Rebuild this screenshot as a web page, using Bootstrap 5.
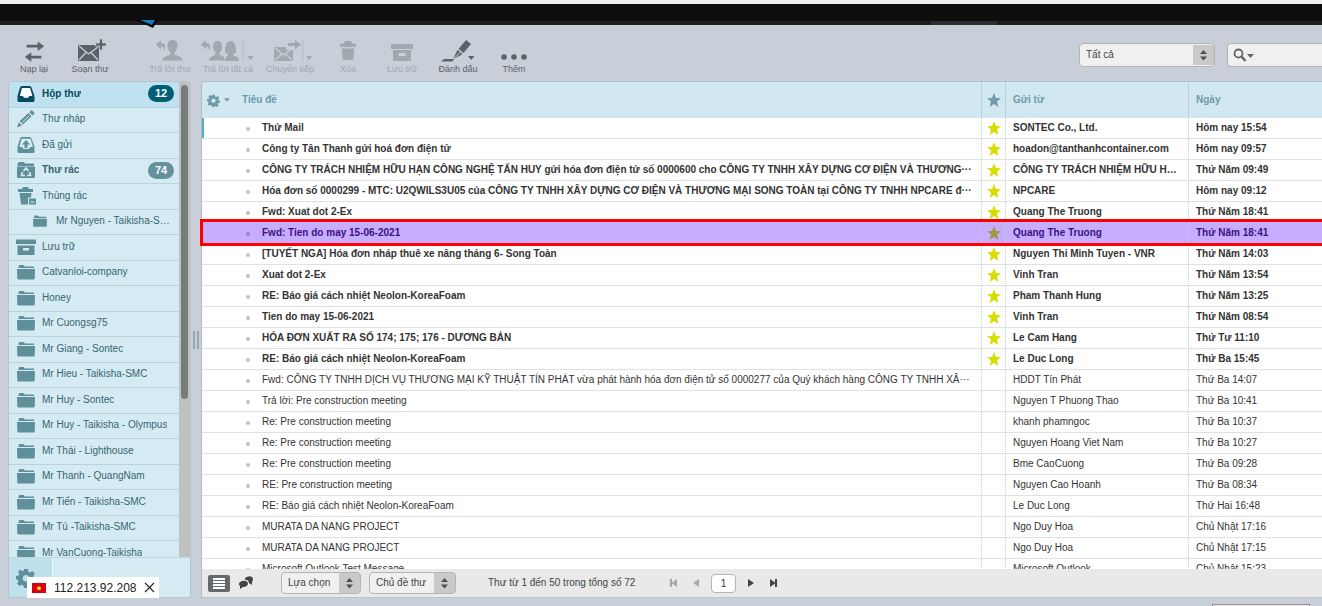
<!DOCTYPE html>
<html lang="vi">
<head>
<meta charset="utf-8">
<meta name="viewport" content="width=device-width, initial-scale=1">
<title>Hộp thư</title>
<link href="https://cdn.jsdelivr.net/npm/bootstrap@5.3.0/dist/css/bootstrap.min.css" rel="stylesheet">
<style>
body{font-family:"Liberation Sans",Arial,sans-serif;font-size:10px;line-height:14px;color:#333;background:#c8cfd9}
button{font:inherit;color:inherit;border:0;background:none;padding:0}
svg{display:block;fill:currentColor}
.topline{height:4px;background:#eee}
.topbar{height:21px;background:#0d0d0d;border-bottom:4px solid #1d1d1b;position:relative}
.topbar .logo-tip{position:absolute;left:136px;bottom:-7px}
.topbar .tab-edge{position:absolute;right:325px;bottom:-4px;width:66px;height:4px;background:#2e2e2e}
.toolbar{height:56px;padding:14px 0 0 6px;color:#5b6368}
.tool{display:flex;flex-direction:column;align-items:center;height:36px;font-size:9px;line-height:12px;white-space:nowrap;position:relative}
.tool svg{height:24px;flex:none}
.tool:disabled{color:#a1a8b0}
.w52{width:52px}.w56{width:56px}.w60{width:60px}.w64{width:64px}
.pick{appearance:none;height:22px;border:1px solid #b4b4b4;border-radius:4px;color:#444;font-size:10px;padding:0 24px 1px 6px;
background:url("data:image/svg+xml,%3Csvg xmlns='http://www.w3.org/2000/svg' viewBox='0 0 21 20'%3E%3Cpath fill='%23c9c9c9' d='M0 0h21v20H0z'/%3E%3Cpath fill='%23505050' d='M7 9l3.500-4L14 9zM7 11.500l3.500 4 3.500-4z'/%3E%3C/svg%3E") right center/21px 100% no-repeat #f0f0f0}
.pick-wide{width:136px;height:24px}
.search{width:95px;height:24px;border:1px solid #b4b4b4;border-right:0;border-radius:4px 0 0 4px;background:#f0f0f0;padding-left:5px;color:#666}
.search input{width:100%;min-width:0;border:0;background:none;outline:0}
.side{width:183px;margin-left:8px;border:1px solid #b3c5d0;border-radius:4px 4px 0 0;background:#d5ebf3;overflow:hidden}
.folders{display:grid;grid-auto-rows:26px 25px;align-content:start;overflow:hidden;margin:0;padding:0;list-style:none}
.folders a{display:flex;align-items:center;height:100%;padding:0 5px 2px 7px;border-bottom:1px solid #b9d3dc;color:#376572;text-decoration:none}
.folders svg{width:20px;height:18px;margin-right:6px;color:#5f8f9b;flex:none}
.folders .sub{padding-left:22px}
.folders .sub svg{width:18px;height:14px;margin-right:7px}
.folders .unread{font-weight:700}
.folders .current{background:#c0e2f0;color:#074b61}
.folders .current svg{color:#074b61}
.count{margin-left:auto;min-width:26px;height:17px;line-height:17px;border-radius:9px;text-align:center;color:#fff;font-size:11px;background:#64919d}
.current .count{background:#005d76}
.track{width:11px;background:#c1c1c1;padding:3px 2px;flex:none}
.thumb{height:67%;border-radius:4px;background:#747d7b}
.side-foot{height:40px;border-top:1px solid #bdd7e1;flex:none}
.side-foot button{width:44px;background:#bfe1ec;color:#5f8f9b;border-right:1px solid #eef7fa;padding-left:7px}
.split{width:10px;flex:none}
.split i{display:block;width:6px;height:18px;border:solid #9ca6b1;border-width:0 2px}
.main-panel{border:1px solid #b1bdc9;border-width:1px 0 0 1px;border-radius:4px 0 0 0;min-width:0}
.listbox{overflow-x:visible;overflow-y:clip;min-height:0;background:#fff;border-radius:4px 0 0 0}
.msgs{table-layout:fixed;width:100%;margin:0;border-collapse:separate;border-spacing:0;color:#333}
.msgs th,.msgs td{padding:0 7px!important;height:21px;border-bottom:1px solid #dfe2e3!important;white-space:nowrap;overflow:hidden;text-overflow:ellipsis;vertical-align:middle;color:inherit!important;background:none!important;line-height:14px}
.msgs thead th{height:36px;background:#d1e8f2!important;color:#6e9ba7!important;border-bottom:0!important}
.msgs thead th:first-child{border-radius:4px 0 0 0}
.msgs thead th+th{border-left:1px solid #b9d0da}
.msgs td+td{border-left:1px dotted #c3ced2}
.msgs thead .opt{padding:0 0 0 5px!important}
.msgs td.subj{padding:0 8px 0 60px!important;background:radial-gradient(circle at 46px 11px,#c4c4c4 1.500px,transparent 2.500px)!important}
.msgs .flag{padding:0!important}
.msgs .flag svg{margin:0 auto;width:14px;height:14px}
.msgs tbody .flag{color:#d6de00!important}
.msgs .new{font-weight:700}
.msgs .focus td.subj{box-shadow:inset 2px 0 #4fb0bf}
.msgs .picked{background:#c6adff;color:#3c1080;position:relative}
.msgs .picked .subj{background:radial-gradient(circle at 46px 11px,#9c83cc 1.500px,transparent 2.500px)!important}
.msgs .picked .flag{color:#a09840!important}
.msgs .picked .subj::after{content:"";position:absolute;left:-2px;right:-3px;top:-4px;height:27px;border:3px solid #f00;box-shadow:inset 0 1px #c6adff}
.msg-foot{height:29px;background:#e9e9e9;border-bottom:1px solid #bcc4ca;flex:none;color:#444;padding-left:6px}
.mode{width:22px;height:17px;background:#646a6e;color:#fff;border-radius:2px}
.tree{width:16px;margin-right:27px}
.first{width:80px}
.second{width:87px}
.range{margin-left:32px;width:179px;white-space:nowrap}
.pager{gap:8px}
.pager button{width:14px;display:flex;justify-content:center}
.pager .dim{color:#a8a8a8}
.pageno{width:25px;height:19px;border:1px solid #b4b4b4;border-radius:4px;text-align:center;font-size:10px;color:#333}
.hostbar{position:absolute;left:27px;bottom:8px;width:132px;height:21px;background:#fff;color:#222;font-size:12px;padding:0 4px 0 5px}
.hostbar svg{flex:none}
.corner{position:absolute;right:12px;bottom:0;width:98px;height:2px;background:#e8e8e8;border:1px solid #998f92;border-bottom:0}
</style>
</head>
<body>
<svg width="0" height="0" class="position-absolute" aria-hidden="true">
<symbol id="star" viewBox="0 0 14 14"><path d="M7 0l1.900 4.900 5.100.3-4 3.300L11.400 14 7 11 2.600 14 4 8.500 0 5.200l5.100-.3z"/></symbol>
<symbol id="gear" viewBox="0 0 20 20"><path fill-rule="evenodd" d="M8 1h4l.4 2.700 1.800.8L16.400 3 19 5.700l-1.700 2.100.5 1.700 2.200.4v3.500l-2.700.5-.8 1.700 1.500 2.200-2.600 2.300-2.200-1.500-1.500.6L11 20H8l-.7-2.500-1.800-.7L3.300 18 1 15.600l1.500-2.200-.7-1.600L0 11.300V8l2.600-.5.7-1.600L2 3.900 4.400 1.500l2.200 1.700 1-.4zM10 7a3.300 3.300 0 1 0 0 6.600A3.300 3.300 0 0 0 10 7z"/></symbol>
<symbol id="inbox" viewBox="0 0 20 18"><path fill="#fff" d="M5.500 3h8.500l3 9H3z"/><path fill-rule="evenodd" d="M4 2.500Q4.400 1 6 1h7.500q1.500 0 2 1.500L18.500 11v4.500q0 1.500-1.500 1.500H3q-1.500 0-1.500-1.500V11zM6 3L3.800 11h3l1.500 2h3.600l1.500-2h3l-2.300-8z"/></symbol>
<symbol id="pencil" viewBox="0 0 20 18"><path d="M1 17.500l1.700-5.200 3.200 3.200zM3.600 11.300l8.800-8.200 3.200 3.200-8.800 8.200zM13.400 2.200L15.600.1l3.200 3.200-2.200 2.100z"/><path stroke="#d5ebf3" d="M5.500 13l8-7.500"/></symbol>
<symbol id="sent" viewBox="0 0 20 18"><path fill-rule="evenodd" d="M4 2.500Q4.400 1 6 1h7.500q1.500 0 2 1.500L18.500 11v4.500q0 1.500-1.500 1.500H3q-1.500 0-1.500-1.500V11zM5.600 2.800L3.300 11h2.500l1.700 2h5.200l1.700-2h2.500l-2.300-8.200z"/><path d="M10 4l4 4.500h-2.500V12h-3V8.500H6z"/></symbol>
<symbol id="junk" viewBox="0 0 20 18"><path d="M1.500 2.500L3 1h5l1 1.500h9V5h-16.500zM1 5.500h18V16q0 1-1 1H2q-1 0-1-1z"/><path d="M7.500 10L10 7l2.500 3M13.500 11l1 3.500H11M9 14.500H5.500l1-3.500" fill="none" stroke="#d5ebf3" stroke-width="1.700"/></symbol>
<symbol id="bin" viewBox="0 0 20 18"><path d="M2 2h4L7 0h5l1 2h4v3H2zM3.500 6h12l-.5 4.500h-3V17.500H5zM13 11.500h7V17.500h-7z"/><path stroke="#d5ebf3" d="M14.500 15h4"/></symbol>
<symbol id="folder" viewBox="0 0 20 18"><path d="M2.500 3.500Q2.500 2 4 2h3.500l1.500 1.500h9V5h-15.500zM1 6h18l-.3 9.500q0 1-1 1H2.300q-1 0-1-1z"/></symbol>
<symbol id="box" viewBox="0 0 20 18"><path fill-rule="evenodd" d="M0 1.500h20V6H0zM1.500 7.500h17V17h-17zM7 10v2.500h6V10z"/></symbol>
<symbol id="caret" viewBox="0 0 7 4"><path d="M0 0h7L3.500 4z"/></symbol>
</svg>

<div class="vh-100 d-flex flex-column overflow-hidden position-relative">
<div class="topline flex-shrink-0"></div>
<header class="topbar flex-shrink-0"><svg class="logo-tip" width="22" height="8" aria-hidden="true"><path d="M0 0l17 8 5-8z" fill="#000"/><path d="M4 0l12 5 3-5z" fill="#0f7fc4"/></svg><span class="tab-edge"></span></header>

<nav class="toolbar d-flex flex-shrink-0" aria-label="Công cụ">
<button class="tool w56"><svg width="24" viewBox="0 0 24 24"><path d="M4 5h12V1.500l7 5-7 5V8H4zM20 16.500H9V13l-7 5 7 5v-3.500h11z" transform="translate(1 1) scale(.92 .95)"/></svg>Nạp lại</button>
<button class="tool w56 me-4"><svg width="32" viewBox="0 0 32 24"><path d="M4 6h21v16H4z"/><path d="M5 7l9.500 8L24 8M5 21l7-7.500M24 21l-7-7.500" stroke="#c8cfd9" stroke-width="1.300" fill="none"/><path d="M25.500 0h3v4h4v3h-4v4h-3V7h-4V4h4z" stroke="#c8cfd9" stroke-width=".8"/></svg>Soạn thư</button>
<button class="tool w56" disabled><svg width="30" viewBox="0 0 30 24"><path d="M1 5.500l5-4.500v3c4 0 5.500 3 3 8 0-3.500-1-4.500-3-4.500v3zM12.500 6q0-5 5-5t5 5-3 7.500v2l6 2.500q2 1 2 3.500H7.500q0-2.500 2-3.500l6-2.500v-2q-3-2.500-3-7.500z"/></svg>Trả lời thư</button>
<button class="tool w60" disabled><svg width="54" viewBox="0 0 54 24"><path d="M0 5.500L5 1v3c4 0 5.500 3 3 8 0-3.500-1-4.500-3-4.500v3zM12 7q0-5 4.500-5T21 7t-2.500 6.500v2L23 18v3.500H8q0-2.500 2-3.500l4.500-2.500v-2Q12 11 12 7zM24 14q-.5-12 5.500-12T35 14l-3 1v1l5 2.500q1 .5 1 3.500H23.500l.5-3 3-3v-1z"/><path d="M42 1v22" stroke="#b4bcc6"/><path d="M46 17h7l-3.500 4z"/></svg>Trả lời tất cả</button>
<button class="tool w64" disabled><svg width="44" viewBox="0 0 44 24"><path d="M6 8h12v3h7v11H6z"/><path d="M7 9l8.500 7L24 10M7 21l6.500-6M24 21l-6.500-6" stroke="#c8cfd9" stroke-width="1.300" fill="none"/><path d="M20 4h7V1l6 4.500-6 4.500V7h-7z"/><path d="M35 1v22" stroke="#b4bcc6"/><path d="M38 17h6l-3 4z"/></svg>Chuyển tiếp</button>
<button class="tool w52" disabled><svg width="16" viewBox="0 0 16 24"><path d="M0 4.500h4L5 2h6l1 2.500h4V8H0zM1.500 9.500h13L13 21H3z"/></svg>Xóa</button>
<button class="tool w56" disabled><svg width="22" viewBox="0 0 22 24"><path fill-rule="evenodd" d="M0 5h22v5H0zM2 11h18v11H2zM7.500 14v3h7v-3z"/></svg>Lưu trữ</button>
<button class="tool w56"><svg width="34" viewBox="0 0 34 24"><path d="M25 1l5 4-7.500 9-5-4zM16.500 11l5 4-4 2.500-5 2 2-4.500z"/><path d="M0 22.500l3-2.500h10l-1.500 2.500z"/><path d="M27 17h6.500l-3.300 4z"/><path d="M14 18.500l5-5" stroke="#c8cfd9"/></svg>Đánh dấu</button>
<button class="tool w56"><svg width="28" viewBox="0 0 28 24"><circle cx="4" cy="18" r="2.800"/><circle cx="14" cy="18" r="2.800"/><circle cx="24" cy="18" r="2.800"/></svg>Thêm</button>
<div class="d-flex ms-auto mt-1">
<select class="pick pick-wide me-2" aria-label="Bộ lọc"><option>Tất cả</option></select>
<div class="search d-flex align-items-center ms-1"><svg width="22" height="14" viewBox="0 0 22 14" class="flex-shrink-0"><circle cx="5.500" cy="5.500" r="4" fill="none" stroke="currentColor" stroke-width="1.800"/><path d="M8.500 8.500l4 4.500" stroke="currentColor" stroke-width="2.500"/><path d="M14 6h7l-3.500 4z"/></svg><input type="search" aria-label="Tìm kiếm"></div>
</div>
</nav>

<div class="d-flex flex-fill pb-2 overflow-hidden">
<aside class="side d-flex flex-column flex-shrink-0">
<div class="d-flex flex-fill overflow-hidden"><ul class="folders flex-fill" id="folders"></ul><div class="track"><div class="thumb"></div></div></div>
<div class="side-foot d-flex"><button aria-label="Thiết lập"><svg width="20" height="20"><use href="#gear"/></svg></button></div>
</aside>
<div class="split d-flex align-items-center justify-content-center"><i></i></div>
<main class="main-panel flex-fill d-flex flex-column">
<div class="listbox flex-fill">
<table class="table msgs">
<colgroup><col><col style="width:24px"><col style="width:183px"><col style="width:134px"></colgroup>
<thead><tr><th class="opt"><div class="d-flex align-items-center"><svg width="13" height="13" class="me-1"><use href="#gear"/></svg><svg width="6" height="4" class="me-2"><use href="#caret"/></svg><span class="ps-1">Tiêu đề</span></div></th><th class="flag"><svg><use href="#star"/></svg></th><th>Gửi từ</th><th>Ngày</th></tr></thead>
<tbody id="rows"></tbody>
</table>
</div>
<footer class="msg-foot d-flex align-items-center">
<button class="mode me-2" aria-label="Danh sách"><svg width="22" height="17"><path d="M5 3h12v2H5zM5 6h12v2H5zM5 9h12v2H5zM5 12h12v2H5z"/></svg></button>
<button aria-label="Chuỗi thư" class="tree"><svg width="16" height="14"><path d="M7 2q4-3 7-1 2 2 0 5l0 3-3-2q-1-4-4-3z"/><path d="M4 5q5-1 6 2 0 4-5 4l-3 2v-3q-3-3 2-5z"/></svg></button>
<select class="pick first" aria-label="Lựa chọn"><option>Lựa chọn</option></select>
<select class="pick second ms-2" aria-label="Chủ đề"><option>Chủ đề thư</option></select>
<span class="range">Thư từ 1 đến 50 trong tổng số 72</span>
<div class="pager d-flex align-items-center">
<button disabled aria-label="Trang đầu" class="dim"><svg width="8" height="8"><path d="M0 0h2v3.500L7 0v8L2 4.500V8H0z"/></svg></button>
<button disabled aria-label="Trang trước" class="dim"><svg width="6" height="8"><path d="M6 0v8L0 4z"/></svg></button>
<input class="pageno" value="1" aria-label="Trang">
<button aria-label="Trang sau"><svg width="6" height="8"><path d="M0 0v8l6-4z"/></svg></button>
<button aria-label="Trang cuối"><svg width="8" height="8"><path d="M8 0H6v3.500L1 0v8l5-3.500V8h2z"/></svg></button>
</div>
</footer>
</main>
</div>
<div class="hostbar d-flex align-items-center"><svg width="14" height="10" class="me-2"><path fill="#d80015" d="M0 0h14v10H0z"/><path fill="#ff0" d="M7 2.500l.8 1.700 1.900.2-1.400 1.200.4 1.900L7 6.500l-1.700 1 .4-1.900-1.400-1.200 1.900-.2z"/></svg><span>112.213.92.208</span><button class="ms-auto" aria-label="Đóng"><svg width="11" height="11"><path d="M1 1l9 9M10 1l-9 9" stroke="#222" stroke-width="1.100"/></svg></button></div>
<div class="corner"></div>
</div>
<script>
// icon, label, unread count, extra class
const folders=[["inbox","Hộp thư",12,"unread current"],["pencil","Thư nháp"],["sent","Đã gửi"],["junk","Thư rác",74,"unread"],["bin","Thùng rác"],["folder","Mr Nguyen - Taikisha-S…",0,"sub"],["box","Lưu trữ"],["folder","Catvanloi-company"],["folder","Honey"],["folder","Mr Cuongsg75"],["folder","Mr Giang - Sontec"],["folder","Mr Hieu - Taikisha-SMC"],["folder","Mr Huy - Sontec"],["folder","Mr Huy - Taikisha - Olympus"],["folder","Mr Thái - Lighthouse"],["folder","Mr Thanh - QuangNam"],["folder","Mr Tiến - Taikisha-SMC"],["folder","Mr Tú -Taikisha-SMC"],["folder","Mr VanCuong-Taikisha"]];
document.getElementById("folders").innerHTML=folders.map(([i,t,n,c])=>`<li class="overflow-hidden"><a href="#" class="${c||""}"><svg><use href="#${i}"/></svg><span class="text-truncate">${t}</span>${n?`<span class="count">${n}</span>`:""}</a></li>`).join("");
// subject, sender, date
const mails=[["Thử Mail","SONTEC Co., Ltd.","Hôm nay 15:54"],["Công ty Tân Thanh gửi hoá đơn điện tử","hoadon@tanthanhcontainer.com","Hôm nay 09:57"],["CÔNG TY TRÁCH NHIỆM HỮU HẠN CÔNG NGHỆ TẤN HUY gửi hóa đơn điện tử số 0000600 cho CÔNG TY TNHH XÂY DỰNG CƠ ĐIỆN VÀ THƯƠNG···","CÔNG TY TRÁCH NHIỆM HỮU H…","Thứ Năm 09:49"],["Hóa đơn số 0000299 - MTC: U2QWILS3U05 của CÔNG TY TNHH XÂY DỰNG CƠ ĐIỆN VÀ THƯƠNG MẠI SONG TOÀN tại CÔNG TY TNHH NPCARE đ···","NPCARE","Hôm nay 09:12"],["Fwd: Xuat dot 2-Ex","Quang The Truong","Thứ Năm 18:41"],["Fwd: Tien do may 15-06-2021","Quang The Truong","Thứ Năm 18:41"],["[TUYẾT NGA] Hóa đơn nháp thuê xe nâng tháng 6- Song Toàn","Nguyen Thi Minh Tuyen - VNR","Thứ Năm 14:03"],["Xuat dot 2-Ex","Vinh Tran","Thứ Năm 13:54"],["RE: Báo giá cách nhiệt Neolon-KoreaFoam","Pham Thanh Hung","Thứ Năm 13:25"],["Tien do may 15-06-2021","Vinh Tran","Thứ Năm 08:54"],["HÓA ĐƠN XUẤT RA SỐ 174; 175; 176 - DƯƠNG BẢN","Le Cam Hang","Thứ Tư 11:10"],["RE: Báo giá cách nhiệt Neolon-KoreaFoam","Le Duc Long","Thứ Ba 15:45"],["Fwd: CÔNG TY TNHH DỊCH VỤ THƯƠNG MẠI KỸ THUẬT TÍN PHÁT vừa phát hành hóa đơn điện tử số 0000277 của Quý khách hàng CÔNG TY TNHH XÂ···","HDDT Tín Phát","Thứ Ba 14:07"],["Trả lời: Pre construction meeting","Nguyen T Phuong Thao","Thứ Ba 10:41"],["Re: Pre construction meeting","khanh phamngoc","Thứ Ba 10:37"],["Re: Pre construction meeting","Nguyen Hoang Viet Nam","Thứ Ba 10:27"],["Re: Pre construction meeting","Bme CaoCuong","Thứ Ba 09:28"],["RE: Pre construction meeting","Nguyen Cao Hoanh","Thứ Ba 08:34"],["RE: Báo giá cách nhiệt Neolon-KoreaFoam","Le Duc Long","Thứ Hai 16:48"],["MURATA DA NANG PROJECT","Ngo Duy Hoa","Chủ Nhật 17:16"],["MURATA DA NANG PROJECT","Ngo Duy Hoa","Chủ Nhật 17:15"],["Microsoft Outlook Test Message","Microsoft Outlook","Chủ Nhật 15:23"]];
const star='<svg><use href="#star"/></svg>';
document.getElementById("rows").innerHTML=mails.map(([s,f,d],i)=>`<tr class="${i<12?"new":""} ${i==0?"focus":""} ${i==5?"picked":""}"><td class="subj">${s}</td><td class="flag">${i<12?star:""}</td><td>${f}</td><td>${d}</td></tr>`).join("");
</script>
<script src="https://cdn.jsdelivr.net/npm/bootstrap@5.3.0/dist/js/bootstrap.bundle.min.js"></script>
</body>
</html>
